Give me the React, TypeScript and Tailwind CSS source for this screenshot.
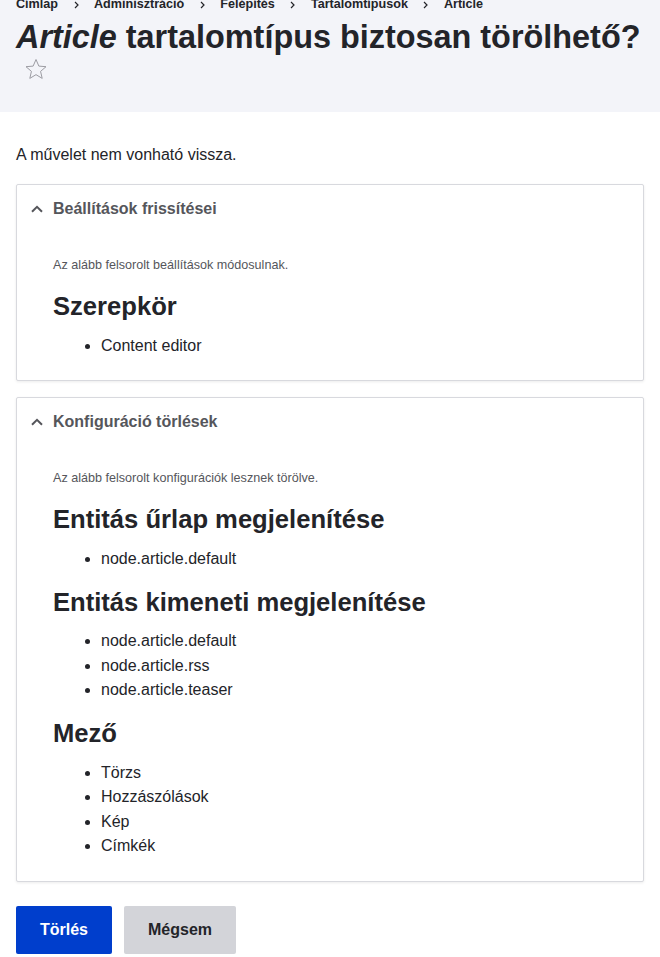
import React from "react";

const crumbs = ["Címlap", "Adminisztráció", "Felépítés", "Tartalomtípusok", "Article"];

const Chevron = () => (
  <svg width="12" height="8" viewBox="0 0 12 8" className="shrink-0">
    <polyline points="1,6.8 6,1.8 11,6.8" fill="none" stroke="#55565b" strokeWidth="2" />
  </svg>
);

const Section: React.FC<{ title: string; note: string; groups: { name: string; items: string[] }[] }> = ({
  title,
  note,
  groups,
}) => (
  <div className="border border-[#d8d9de] rounded-[2px] bg-white shadow-[0_1px_3px_rgba(0,0,0,0.08)]">
    <div className="flex items-center gap-[10px] pl-[14px] pt-4 pb-4 leading-4 font-bold text-[#55565b]">
      <Chevron />
      <span>{title}</span>
    </div>
    <div className="pl-9 pr-4 pt-[23px] pb-[22px]">
      <p className="text-[12.6px] leading-[18px] text-[#55565b] mb-[17px]">{note}</p>
      {groups.map((g, i) => (
        <div key={g.name}>
          <h2 className="text-[25.6px] leading-[30.7px] font-bold text-[#232429] mb-[12px]">{g.name}</h2>
          <ul className={"list-disc pl-12 " + (i < groups.length - 1 ? "mb-[15px]" : "")}>
            {g.items.map((it) => (
              <li key={it} className="leading-[24.6px]">
                {it}
              </li>
            ))}
          </ul>
        </div>
      ))}
    </div>
  </div>
);

export default function App() {
  return (
    <div className="min-h-[957px] bg-white text-[#232429] font-['Liberation_Sans',Arial,sans-serif] text-base">
      <div className="bg-[#f3f4f9] px-4 pb-[32px]">
        <nav className="flex items-center -mt-[5px] text-[12.6px] leading-[19px] font-bold text-[#232429]">
          {crumbs.map((c, i) => (
            <React.Fragment key={c}>
              {i > 0 && (
                <span className="w-9 flex justify-center">
                  <svg width="5" height="8" viewBox="0 0 5 8">
                    <polyline points="1,1 4,4 1,7" fill="none" stroke="#232429" strokeWidth="1.2" />
                  </svg>
                </span>
              )}
              <span>{c}</span>
            </React.Fragment>
          ))}
        </nav>
        <h1 className="mt-[4px] text-[32.4px] leading-[38.9px] font-bold whitespace-nowrap">
          <em>Article</em> tartalomtípus biztosan törölhető?
        </h1>
        <div className="mt-[1px] ml-[8px] h-[22px] w-[24px] flex items-center justify-center">
          <svg width="24" height="24" viewBox="0 0 24 24">
            <path
              d="M12 2.5l2.85 6.6 7.15.6-5.43 4.7 1.63 7-6.2-3.75-6.2 3.75 1.63-7L2 9.7l7.15-.6z"
              fill="none"
              stroke="#9c9ca3"
              strokeWidth="1"
              strokeLinejoin="miter"
            />
          </svg>
        </div>
      </div>

      <div className="px-4 pt-[31px]">
        <p className="leading-6 mb-[17px]">A művelet nem vonható vissza.</p>
        <div className="flex flex-col gap-4">
          <Section
            title="Beállítások frissítései"
            note="Az alább felsorolt beállítások módosulnak."
            groups={[{ name: "Szerepkör", items: ["Content editor"] }]}
          />
          <Section
            title="Konfiguráció törlések"
            note="Az alább felsorolt konfigurációk lesznek törölve."
            groups={[
              { name: "Entitás űrlap megjelenítése", items: ["node.article.default"] },
              {
                name: "Entitás kimeneti megjelenítése",
                items: ["node.article.default", "node.article.rss", "node.article.teaser"],
              },
              { name: "Mező", items: ["Törzs", "Hozzászólások", "Kép", "Címkék"] },
            ]}
          />
        </div>
        <div className="flex gap-3 mt-[24px]">
          <button className="h-12 px-6 rounded-[2px] bg-[#003ecc] text-white font-bold">Törlés</button>
          <button className="h-12 px-6 rounded-[2px] bg-[#d3d4d9] text-[#232429] font-bold">Mégsem</button>
        </div>
      </div>
    </div>
  );
}
